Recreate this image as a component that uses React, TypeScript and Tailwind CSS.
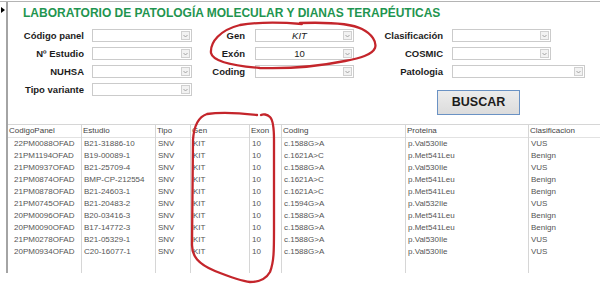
import React from "react";

const rows = [
  ["22PM0088OFAD", "B21-31886-10", "SNV", "KIT", "10", "c.1588G>A", "p.Val530Ile", "VUS"],
  ["21PM1194OFAD", "B19-00089-1", "SNV", "KIT", "10", "c.1621A>C", "p.Met541Leu", "Benign"],
  ["21PM0937OFAD", "B21-25709-4", "SNV", "KIT", "10", "c.1588G>A", "p.Val530Ile", "VUS"],
  ["21PM0874OFAD", "BMP-CP-212554", "SNV", "KIT", "10", "c.1621A>C", "p.Met541Leu", "Benign"],
  ["21PM0878OFAD", "B21-24603-1", "SNV", "KIT", "10", "c.1621A>C", "p.Met541Leu", "Benign"],
  ["21PM0745OFAD", "B21-20483-2", "SNV", "KIT", "10", "c.1594G>A", "p.Val532Ile", "VUS"],
  ["20PM0096OFAD", "B20-03416-3", "SNV", "KIT", "10", "c.1588G>A", "p.Met541Leu", "Benign"],
  ["20PM0090OFAD", "B17-14772-3", "SNV", "KIT", "10", "c.1588G>A", "p.Met541Leu", "Benign"],
  ["21PM0278OFAD", "B21-05329-1", "SNV", "KIT", "10", "c.1588G>A", "p.Val530Ile", "VUS"],
  ["20PM0934OFAD", "C20-16077-1", "SNV", "KIT", "10", "c.1588G>A", "p.Val530Ile", "VUS"],
];

const columns = [
  { title: "CodigoPanel", width: "w-[74px] border-r", pad: "pl-[6px]" },
  { title: "Estudio", width: "w-[74px] border-r", pad: "pl-[2px]" },
  { title: "Tipo", width: "w-[35px] border-r", pad: "pl-[2px]" },
  { title: "Gen", width: "w-[59px] border-r", pad: "pl-[2px]" },
  { title: "Exon", width: "w-[32px] border-r", pad: "pl-[2px]" },
  { title: "Coding", width: "w-[124px] border-r", pad: "pl-[2px]" },
  { title: "Proteina", width: "w-[123px] border-r", pad: "pl-[2px]" },
  { title: "Clasificacion", width: "flex-1", pad: "pl-[2px]" },
];

function Combo({ value, italic, w }: { value?: string; italic?: boolean; w: string }) {
  return (
    <div className={`h-[13px] ${w} border border-[#cbcbcb] bg-white flex`}>
      <div
        className={`flex-1 text-center text-[9.5px] leading-[11px] text-[#222] ${italic ? "italic" : ""}`}
      >
        {value}
      </div>
      <div className="w-[9px] my-[1px] mr-[1px] border border-[#d0d0d0] bg-[#f2f2f2] flex items-center justify-center">
        <svg width="5" height="4" viewBox="0 0 5 4">
          <path d="M0.5 1 L2.5 3 L4.5 1" fill="none" stroke="#9a9a9a" strokeWidth="0.9" />
        </svg>
      </div>
    </div>
  );
}

function Label({ text, pr }: { text: string; pr: string }) {
  return (
    <div className={`h-[13px] text-right text-[9.5px] leading-[13px] font-bold text-[#1c1c1c] ${pr}`}>
      {text}
    </div>
  );
}

export default function App() {
  return (
    <div className="relative w-[600px] h-[285px] overflow-hidden bg-white font-['Liberation_Sans',Arial,sans-serif]">
      <div className="pt-[1px]">
        <div className="flex h-[272px] border-t border-[#b4b4b4]">
          {/* record selector */}
          <div className="w-[6px]">
            <div className="ml-[1px] mt-[5px] w-0 h-0 border-y-[3px] border-y-transparent border-l-[4px] border-l-black" />
          </div>

          <div className="flex-1 flex flex-col border-l-2 border-[#a4a4a4]">
            <h1 className="mt-[4px] pl-[15px] text-[12px] leading-[14px] font-bold text-[#1f9550]">
              LABORATORIO DE PATOLOGÍA MOLECULAR Y DIANAS TERAPÉUTICAS
            </h1>

            <div className="mt-[9px] grid grid-cols-[84px_100px_63px_99px_98px_133px] gap-y-[5px] items-start">
              <Label text="Código panel" pr="pr-[8px]" />
              <Combo w="w-[100px]" />
              <Label text="Gen" pr="pr-[10px]" />
              <Combo w="w-[99px]" value="KIT" italic />
              <Label text="Clasificación" pr="pr-[9px]" />
              <Combo w="w-[99px]" />

              <Label text="Nº Estudio" pr="pr-[8px]" />
              <Combo w="w-[100px]" />
              <Label text="Exón" pr="pr-[10px]" />
              <Combo w="w-[99px]" value="10" />
              <Label text="COSMIC" pr="pr-[9px]" />
              <Combo w="w-[99px]" />

              <Label text="NUHSA" pr="pr-[8px]" />
              <Combo w="w-[100px]" />
              <Label text="Coding" pr="pr-[10px]" />
              <Combo w="w-[99px]" />
              <Label text="Patologia" pr="pr-[9px]" />
              <Combo w="w-[133px]" />

              <Label text="Tipo variante" pr="pr-[8px]" />
              <Combo w="w-[100px]" />
              <button className="col-start-5 col-span-2 ml-[83px] mt-[7px] w-[83px] h-[25px] border border-[#6a92c4] bg-gradient-to-b from-[#ececec] to-[#dcdcdc] text-[12.5px] font-bold text-[#1c1c1c]">
                BUSCAR
              </button>
            </div>

            <div className="mt-[9px] flex-1 flex border-t border-[#d6d6d6] text-[8px] leading-[12px] text-[#555]">
              {columns.map((col, ci) => (
                <div key={col.title} className={`${col.width} border-[#d6d6d6] flex flex-col`}>
                  <div className="h-[13px] border-b border-[#e2e2e2] pl-[1px] text-[#444] whitespace-nowrap">
                    {col.title}
                  </div>
                  {rows.map((r, ri) => (
                    <div key={ri} className={`h-[12px] whitespace-nowrap ${col.pad}`}>
                      {r[ci]}
                    </div>
                  ))}
                </div>
              ))}
            </div>
          </div>
        </div>
      </div>

      {/* hand-drawn red marks */}
      <svg className="absolute inset-0 pointer-events-none" width="600" height="285" viewBox="0 0 600 285">
        <path
          d="M300 23 C330 22, 352 24, 362 29 C372 34, 377 42, 375 48 C372 55, 360 58, 345 61 C320 66, 290 69, 260 68 C235 66, 213 62, 211 53 C210 42, 220 30, 240 25 C258 22, 280 22, 302 24"
          fill="none"
          stroke="#c4252b"
          strokeWidth="2.3"
          strokeLinecap="round"
        />
        <path
          d="M257 115 C240 113, 220 112, 207 114 C198 117, 194 125, 193 140 L192 245 C192 256, 198 264, 215 271 C230 277, 240 281, 250 282 C258 282, 266 279, 270 272 C274 262, 274 250, 274 230 L274 140 C274 128, 273 120, 270 117 C267 114, 263 114, 261 115"
          fill="none"
          stroke="#c4252b"
          strokeWidth="2.3"
          strokeLinecap="round"
        />
      </svg>
    </div>
  );
}
